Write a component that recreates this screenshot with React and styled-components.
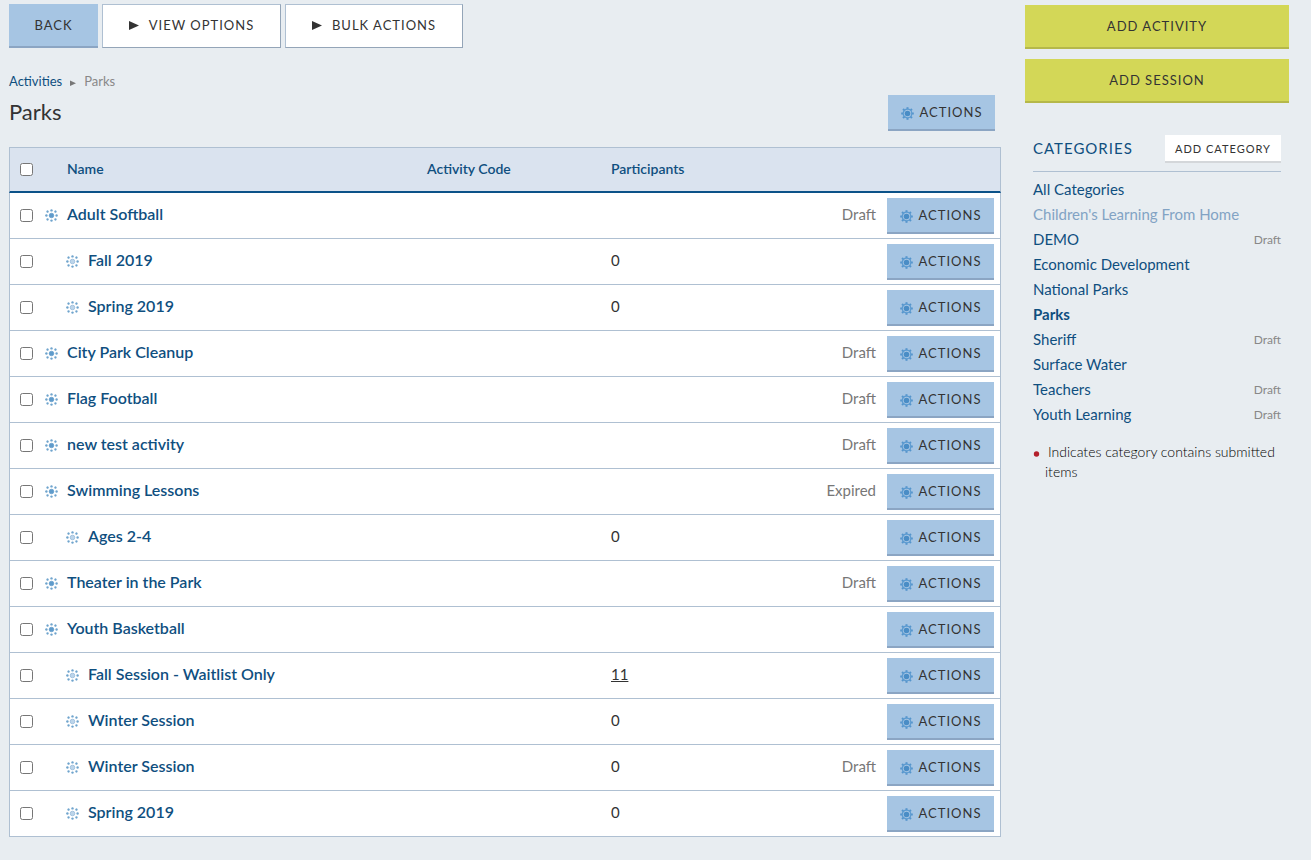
import React from "react";
import styled, { createGlobalStyle } from "styled-components";

const GlobalStyle = createGlobalStyle`
  * { box-sizing: border-box; }
  body {
    margin: 0;
    background: #e8edf1;
    color: #333;
    font-family: Lato, "Liberation Sans", sans-serif;
    font-size: 15px;
    line-height: 20px;
  }
  button { font-family: inherit; cursor: pointer; }
  a { text-decoration: none; }
`;

const Page = styled.div`
  display: flex;
  align-items: flex-start;
  gap: 24px;
  padding: 4px 22px 23px 9px;
`;

const Main = styled.main`
  flex: 1;
  min-width: 0;
`;

const Sidebar = styled.aside`
  width: 264px;
  flex: none;
  padding-top: 1px;
`;

const Toolbar = styled.div`
  display: flex;
  gap: 4px;
`;

const Button = styled.button`
  display: inline-flex;
  align-items: center;
  justify-content: center;
  color: #333;
  font-size: 13px;
  line-height: 20px;
  font-weight: 400;
  letter-spacing: 1px;
  text-transform: uppercase;
  border: 0;
  border-radius: 0;
  background: #a6c5e3;
  border-bottom: 2px solid #8ba5c3;
`;

const BackButton = styled(Button)`
  width: 89px;
  height: 44px;
  padding: 0;
`;

const MenuButton = styled(Button)`
  height: 44px;
  width: ${(p) => p.$width};
  gap: 10px;
  padding: 0 0 2px;
  background: #fff;
  border: 1px solid;
  border-color: #afc0d2 #94a5b8 #94a5b8 #afc0d2;
`;

const ActionButton = styled(Button)`
  width: 107px;
  height: 36px;
  padding: 0;
  gap: 6px;
  vertical-align: top;
  svg { margin-top: 3px; }
`;

const AddButton = styled(Button)`
  width: 100%;
  height: 44px;
  background: #d3d757;
  border-bottom-color: #b5b84a;
`;

const AddStack = styled.div`
  display: grid;
  gap: 10px;
`;

const SmallButton = styled(Button)`
  width: 116px;
  height: 28px;
  padding: 2px 0 0;
  font-size: 11px;
  background: #fff;
  border-bottom-color: #d4d7da;
`;

const Breadcrumb = styled.nav`
  display: flex;
  align-items: center;
  gap: 8px;
  margin-top: 23px;
  font-size: 13px;
  color: #888;
  a { color: #0f4f7f; }
  svg { margin-top: 3px; }
`;

const TitleBar = styled.div`
  display: flex;
  align-items: center;
  justify-content: space-between;
  margin: 4px 6px 16px 0;
`;

const Title = styled.h1`
  margin: 0;
  padding-bottom: 2px;
  font-size: 22px;
  line-height: 28px;
  font-weight: 400;
`;

const Table = styled.table`
  width: 100%;
  table-layout: fixed;
  border-collapse: separate;
  border-spacing: 0;
  background: #fff;
  th, td {
    padding: 0;
    text-align: left;
    vertical-align: middle;
  }
  tr > :first-child { border-left: 1px solid #afc0d2; padding-left: 10px; }
  tr > :last-child { border-right: 1px solid #afc0d2; }
`;

const Col = styled.col`
  width: ${(p) => p.$width};
`;

const HeadCell = styled.th`
  height: 46px;
  background: #dae3ef;
  border-top: 1px solid #afc0d2;
  border-bottom: 2px solid #0b5288;
  color: #0f4f7f;
  font-size: 14px;
  font-weight: 600;
`;

const HeadLabel = styled.div`
  padding-left: ${(p) => (p.$inset ? "22px" : "0")};
  padding-bottom: 2px;
`;

const Cell = styled.td`
  height: 46px;
  border-bottom: 1px solid #afc0d2;
`;

const TextCell = styled(Cell)`
  && { padding-bottom: 3px; }
`;

const StatusCell = styled(TextCell)`
  && {
    padding-right: 5px;
    text-align: right;
  }
  color: #777;
`;

const ActionCell = styled(Cell)`
  && {
    padding-right: 6px;
    text-align: right;
  }
`;

const Checkbox = styled.input.attrs({ type: "checkbox" })`
  display: block;
  width: 13px;
  height: 13px;
  margin: 0;
`;

const NameGroup = styled.div`
  display: flex;
  align-items: center;
  gap: 9px;
  padding-left: ${(p) => (p.$child ? "21px" : "0")};
`;

const NameLink = styled.a`
  padding-bottom: 3px;
  color: #0f4f7f;
  font-size: 16px;
  font-weight: 600;
`;

const CountLink = styled.a`
  color: #333;
  text-decoration: underline;
`;

const Categories = styled.section`
  margin: 32px 8px 0;
`;

const CategoryHead = styled.header`
  display: flex;
  align-items: center;
  justify-content: space-between;
  padding-bottom: 8px;
  margin-bottom: 5px;
  border-bottom: 1px solid #afc0d2;
`;

const CategoryTitle = styled.h2`
  margin: 0;
  padding-bottom: 2px;
  font-size: 15px;
  line-height: 20px;
  font-weight: 400;
  letter-spacing: 1px;
  text-transform: uppercase;
  color: #0f4f7f;
`;

const CategoryList = styled.ul`
  margin: 0;
  padding: 0;
  list-style: none;
`;

const CategoryItem = styled.li`
  display: flex;
  align-items: center;
  justify-content: space-between;
  line-height: 25px;
`;

const CategoryLink = styled.a`
  color: ${(p) => (p.$muted ? "#82a3c4" : "#0f4f7f")};
  font-weight: ${(p) => (p.$current ? 700 : 400)};
`;

const CategoryStatus = styled.span`
  color: #888;
  font-size: 12px;
  line-height: 20px;
`;

const Note = styled.p`
  margin: 15px 0 0;
  padding-left: 12px;
  text-indent: -12px;
  font-size: 14px;
  font-weight: 300;
  color: #000;
`;

const Bullet = styled.svg`
  width: 8px;
  height: 8px;
  margin-right: 7px;
`;

const Triangle = ({ size, color = "#333" }) => (
  <svg width={size} height={size} viewBox="0 0 10 10" aria-hidden="true">
    <path d="M0 1L10 5.5L0 10Z" fill={color} />
  </svg>
);

const ring = [0, 45, 90, 135, 180, 225, 270, 315];

const Gear = () => (
  <svg width="13" height="13" viewBox="0 0 13 13" aria-hidden="true">
    {ring.map((a) => (
      <rect key={a} x="5.5" y="0.2" width="2" height="1.9" fill="#5595cc" transform={`rotate(${a} 6.5 6.5)`} />
    ))}
    <circle cx="6.5" cy="6.5" r="4.3" fill="none" stroke="#5b9ad0" strokeWidth="1.2" />
    <circle cx="6.5" cy="6.5" r="2.8" fill="#4a8dc6" />
  </svg>
);

const Dots = ({ light }) => (
  <svg width="13" height="13" viewBox="0 0 13 13" aria-hidden="true">
    {ring.map((a) => (
      <circle key={a} cx="6.5" cy={a % 90 ? 0.9 : 1.4} r="1.2" fill="#6fa4cd" transform={`rotate(${a} 6.5 6.5)`} />
    ))}
    <circle cx="6.5" cy="6.5" r="2.3" fill={light ? "#bdd5ea" : "#5f9bcb"} stroke={light ? "#8cb5d9" : "#5f9bcb"} strokeWidth="0.7" />
  </svg>
);

const Actions = () => (
  <ActionButton type="button">
    <Gear />
    Actions
  </ActionButton>
);

const rows = [
  { name: "Adult Softball", status: "Draft" },
  { name: "Fall 2019", child: true, count: 0 },
  { name: "Spring 2019", child: true, count: 0 },
  { name: "City Park Cleanup", status: "Draft" },
  { name: "Flag Football", status: "Draft" },
  { name: "new test activity", status: "Draft" },
  { name: "Swimming Lessons", status: "Expired" },
  { name: "Ages 2-4", child: true, count: 0 },
  { name: "Theater in the Park", status: "Draft" },
  { name: "Youth Basketball" },
  { name: "Fall Session - Waitlist Only", child: true, count: 11 },
  { name: "Winter Session", child: true, count: 0 },
  { name: "Winter Session", child: true, count: 0, status: "Draft" },
  { name: "Spring 2019", child: true, count: 0 },
];

const categories = [
  { name: "All Categories" },
  { name: "Children's Learning From Home", muted: true },
  { name: "DEMO", status: "Draft" },
  { name: "Economic Development" },
  { name: "National Parks" },
  { name: "Parks", current: true },
  { name: "Sheriff", status: "Draft" },
  { name: "Surface Water" },
  { name: "Teachers", status: "Draft" },
  { name: "Youth Learning", status: "Draft" },
];

export default function App() {
  return (
    <>
      <GlobalStyle />
      <Page>
        <Main>
          <Toolbar>
            <BackButton type="button">Back</BackButton>
            <MenuButton type="button" $width="179px">
              <Triangle size={10} />
              View Options
            </MenuButton>
            <MenuButton type="button" $width="178px">
              <Triangle size={10} />
              Bulk Actions
            </MenuButton>
          </Toolbar>
          <Breadcrumb aria-label="Breadcrumb">
            <a href="#activities">Activities</a>
            <Triangle size={6} color="#777" />
            <span>Parks</span>
          </Breadcrumb>
          <TitleBar>
            <Title>Parks</Title>
            <Actions />
          </TitleBar>
          <Table>
            <colgroup>
              <Col $width="36px" />
              <Col />
              <Col $width="184px" />
              <Col $width="150px" />
              <Col $width="120px" />
              <Col $width="120px" />
            </colgroup>
            <thead>
              <tr>
                <HeadCell><Checkbox aria-label="Select all" /></HeadCell>
                <HeadCell><HeadLabel $inset>Name</HeadLabel></HeadCell>
                <HeadCell><HeadLabel>Activity Code</HeadLabel></HeadCell>
                <HeadCell><HeadLabel>Participants</HeadLabel></HeadCell>
                <HeadCell />
                <HeadCell />
              </tr>
            </thead>
            <tbody>
              {rows.map((row, i) => (
                <tr key={i}>
                  <Cell><Checkbox aria-label={`Select ${row.name}`} /></Cell>
                  <Cell>
                    <NameGroup $child={row.child}>
                      <Dots light={row.child} />
                      <NameLink href="#item">{row.name}</NameLink>
                    </NameGroup>
                  </Cell>
                  <TextCell />
                  <TextCell>{row.count ? <CountLink href="#participants">{row.count}</CountLink> : row.count}</TextCell>
                  <StatusCell>{row.status}</StatusCell>
                  <ActionCell><Actions /></ActionCell>
                </tr>
              ))}
            </tbody>
          </Table>
        </Main>
        <Sidebar>
          <AddStack>
            <AddButton type="button">Add Activity</AddButton>
            <AddButton type="button">Add Session</AddButton>
          </AddStack>
          <Categories>
            <CategoryHead>
              <CategoryTitle>Categories</CategoryTitle>
              <SmallButton type="button">Add Category</SmallButton>
            </CategoryHead>
            <CategoryList>
              {categories.map((c) => (
                <CategoryItem key={c.name}>
                  <CategoryLink href="#category" $muted={c.muted} $current={c.current}>{c.name}</CategoryLink>
                  {c.status && <CategoryStatus>{c.status}</CategoryStatus>}
                </CategoryItem>
              ))}
            </CategoryList>
            <Note>
              <Bullet viewBox="0 0 8 8" aria-hidden="true"><circle cx="3.5" cy="5" r="2.7" fill="#b3202c" /></Bullet>
              Indicates category contains submitted items
            </Note>
          </Categories>
        </Sidebar>
      </Page>
    </>
  );
}
